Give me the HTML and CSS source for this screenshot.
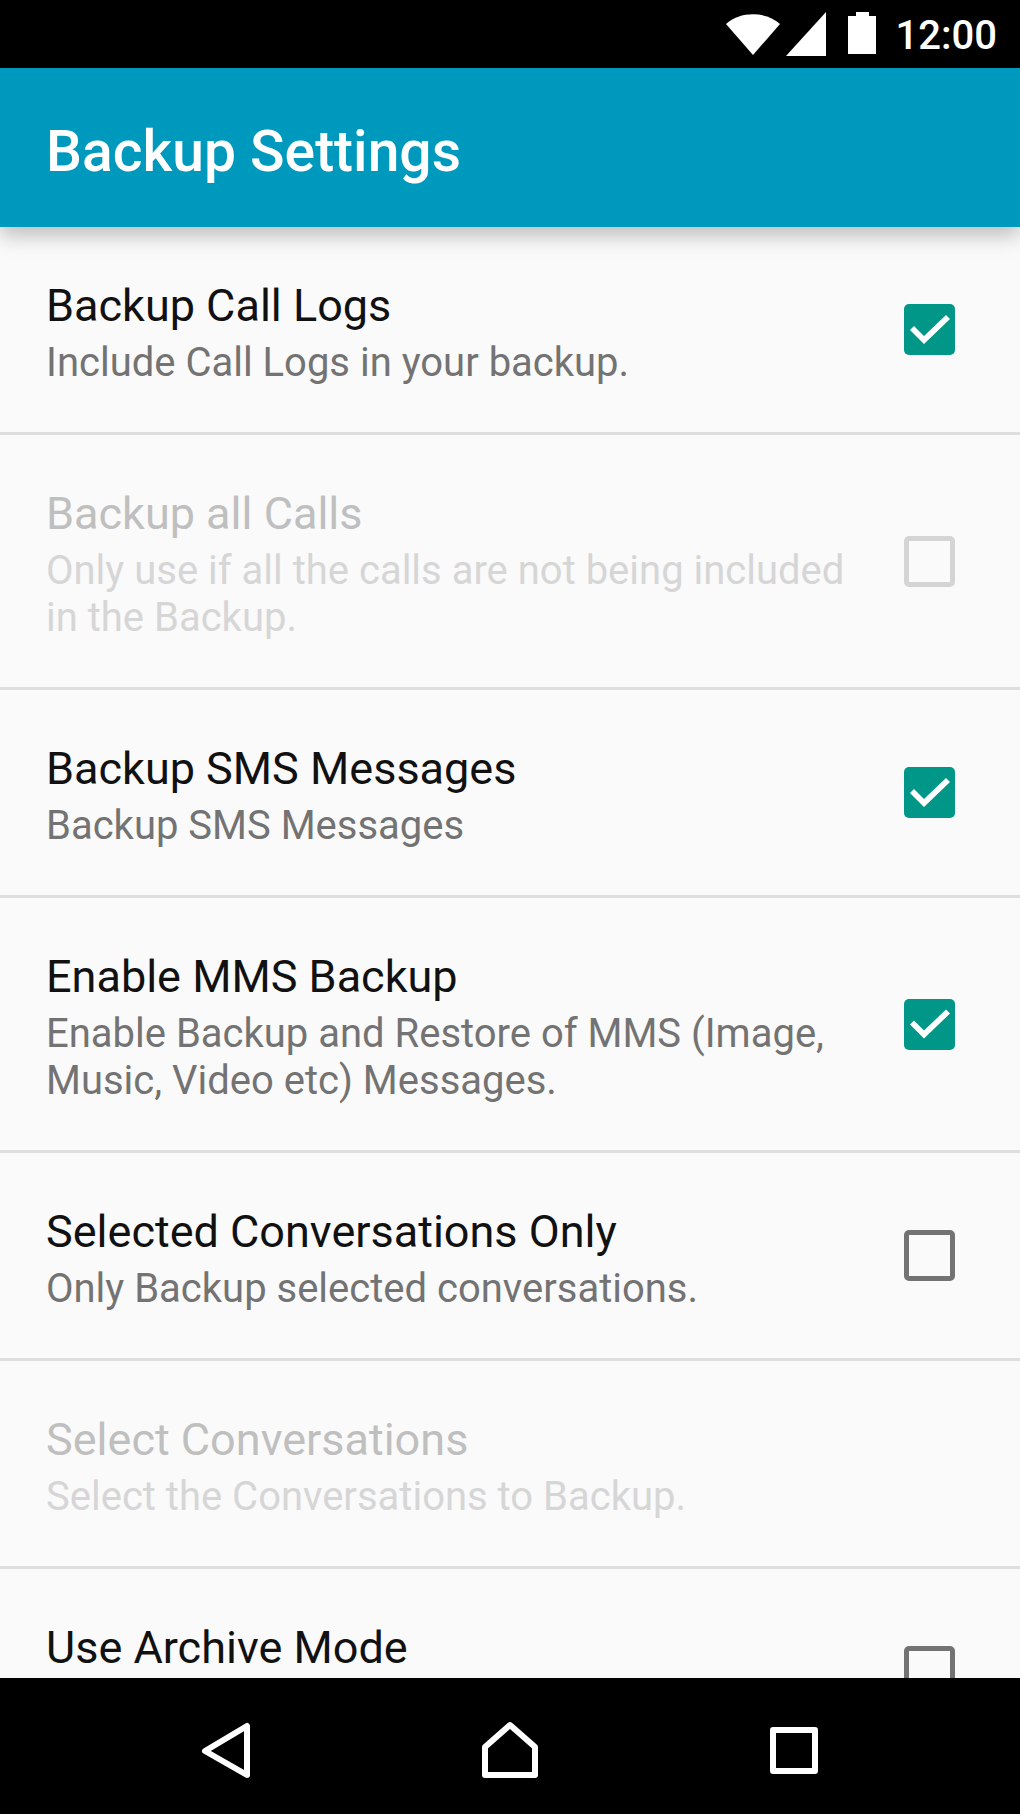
FILE: index.html
```html
<!DOCTYPE html>
<html lang="en">
<head>
<meta charset="utf-8">
<meta name="viewport" content="width=device-width, initial-scale=1">
<title>Backup Settings</title>
<link rel="stylesheet" href="styles.css">
</head>
<body>
<div class="status">
  <svg class="status-wifi" viewBox="0 0 54 44" aria-hidden="true"><path d="M27 43 0 12C14-1 40-1 54 12Z"/></svg>
  <svg class="status-signal" viewBox="0 0 40 44" aria-hidden="true"><path d="M40 0V44H0Z"/></svg>
  <svg class="status-battery" viewBox="0 0 28 44" aria-hidden="true"><path d="M8 0H21V4H28V42H0V4H8Z"/></svg>
  <span class="clock">12:00</span>
</div>
<header class="app-bar"><h1>Backup Settings</h1></header>
<main class="list">
  <label class="row">
    <span class="row-text"><span class="row-title">Backup Call Logs</span><span class="row-summary">Include Call Logs in your backup.</span></span>
    <input class="check" type="checkbox" checked>
  </label>
  <label class="row row-disabled">
    <span class="row-text"><span class="row-title">Backup all Calls</span><span class="row-summary">Only use if all the calls are not being included in the Backup.</span></span>
    <input class="check" type="checkbox" disabled>
  </label>
  <label class="row">
    <span class="row-text"><span class="row-title">Backup SMS Messages</span><span class="row-summary">Backup SMS Messages</span></span>
    <input class="check" type="checkbox" checked>
  </label>
  <label class="row">
    <span class="row-text"><span class="row-title">Enable MMS Backup</span><span class="row-summary">Enable Backup and Restore of MMS (Image, Music, Video etc) Messages.</span></span>
    <input class="check" type="checkbox" checked>
  </label>
  <label class="row">
    <span class="row-text"><span class="row-title">Selected Conversations Only</span><span class="row-summary">Only Backup selected conversations.</span></span>
    <input class="check" type="checkbox">
  </label>
  <button class="row row-disabled" type="button" disabled>
    <span class="row-text"><span class="row-title">Select Conversations</span><span class="row-summary">Select the Conversations to Backup.</span></span>
  </button>
  <label class="row">
    <span class="row-text"><span class="row-title">Use Archive Mode</span></span>
    <input class="check" type="checkbox">
  </label>
</main>
<nav class="nav-bar">
  <button class="nav-button" type="button" aria-label="Back"><svg class="nav-icon" viewBox="0 0 72 72"><path d="M15 41 57 16V65Z"/></svg></button>
  <button class="nav-button" type="button" aria-label="Home"><svg class="nav-icon" viewBox="0 0 72 72"><path d="M36 15 61 37V65H11V37Z"/></svg></button>
  <button class="nav-button" type="button" aria-label="Recent apps"><svg class="nav-icon" viewBox="0 0 72 72"><path d="M15 20H57V61H15Z"/></svg></button>
</nav>
</body>
</html>
```
FILE: styles.css
```css
* {
  box-sizing: border-box;
}

body {
  margin: 0;
  height: 100vh;
  display: flex;
  flex-direction: column;
  background: #fafafa;
  color: #111;
  font-family: Roboto, "Liberation Sans", sans-serif;
}

.status {
  flex: none;
  height: 68px;
  padding: 0 23px 0 0;
  display: flex;
  align-items: center;
  justify-content: flex-end;
  background: #000;
  color: #fff;
}

.status svg {
  height: 44px;
  fill: #fff;
}

.status-wifi {
  width: 54px;
  margin-right: 6px;
}

.status-signal {
  width: 40px;
  margin-right: 22px;
}

.status-battery {
  width: 28px;
  margin-right: 20px;
}

.clock {
  padding-top: 4px;
  font-size: 40px;
  font-weight: 500;
  line-height: 48px;
}

.app-bar {
  flex: none;
  height: 159px;
  padding: 0 46px;
  display: flex;
  align-items: center;
  background: #0099be;
  color: #fff;
  position: relative;
  z-index: 1;
  box-shadow: 0 8px 20px rgba(0, 0, 0, 0.26);
}

.app-bar h1 {
  margin: 0;
  padding-top: 8px;
  font-size: 57px;
  font-weight: 500;
  line-height: 68px;
}

.list {
  flex: 1;
  min-height: 0;
  overflow: hidden;
}

.row {
  width: 100%;
  min-height: 208px;
  padding: 0 65px 0 46px;
  display: flex;
  align-items: center;
  gap: 48px;
  border: 0;
  border-bottom: 3px solid #dedede;
  background: none;
  color: inherit;
  font-family: inherit;
  text-align: left;
}

.row-text {
  flex: 1;
  align-self: flex-start;
  padding: 52px 0 46px;
  display: flex;
  flex-direction: column;
  gap: 7px;
}

.row-title {
  font-size: 45px;
  line-height: 53px;
}

.row-summary {
  font-size: 40px;
  line-height: 47px;
  color: #737373;
}

.row-disabled .row-title {
  color: #bfbfbf;
}

.row-disabled .row-summary {
  color: #d6d6d6;
}

.check {
  appearance: none;
  flex: none;
  width: 51px;
  height: 51px;
  margin: 0;
  border: 5px solid #737373;
  border-radius: 5px;
}

.check:disabled {
  border-color: #d4d4d4;
}

.check:checked {
  border: 0;
  background: #009688;
}

.check:checked::before {
  content: "";
  display: block;
  width: 51px;
  height: 51px;
  background: #fff;
  clip-path: polygon(6px 26px, 10px 22px, 20px 32px, 42px 11px, 46px 15px, 20px 40px);
}

.nav-bar {
  flex: none;
  height: 136px;
  padding: 0 84px;
  display: grid;
  grid-template-columns: repeat(3, 1fr);
  background: #000;
}

.nav-button {
  padding: 0;
  display: flex;
  align-items: center;
  justify-content: center;
  border: 0;
  background: none;
}

.nav-icon {
  width: 72px;
  height: 72px;
  fill: none;
  stroke: #fff;
  stroke-width: 6px;
  stroke-linejoin: round;
}
```
